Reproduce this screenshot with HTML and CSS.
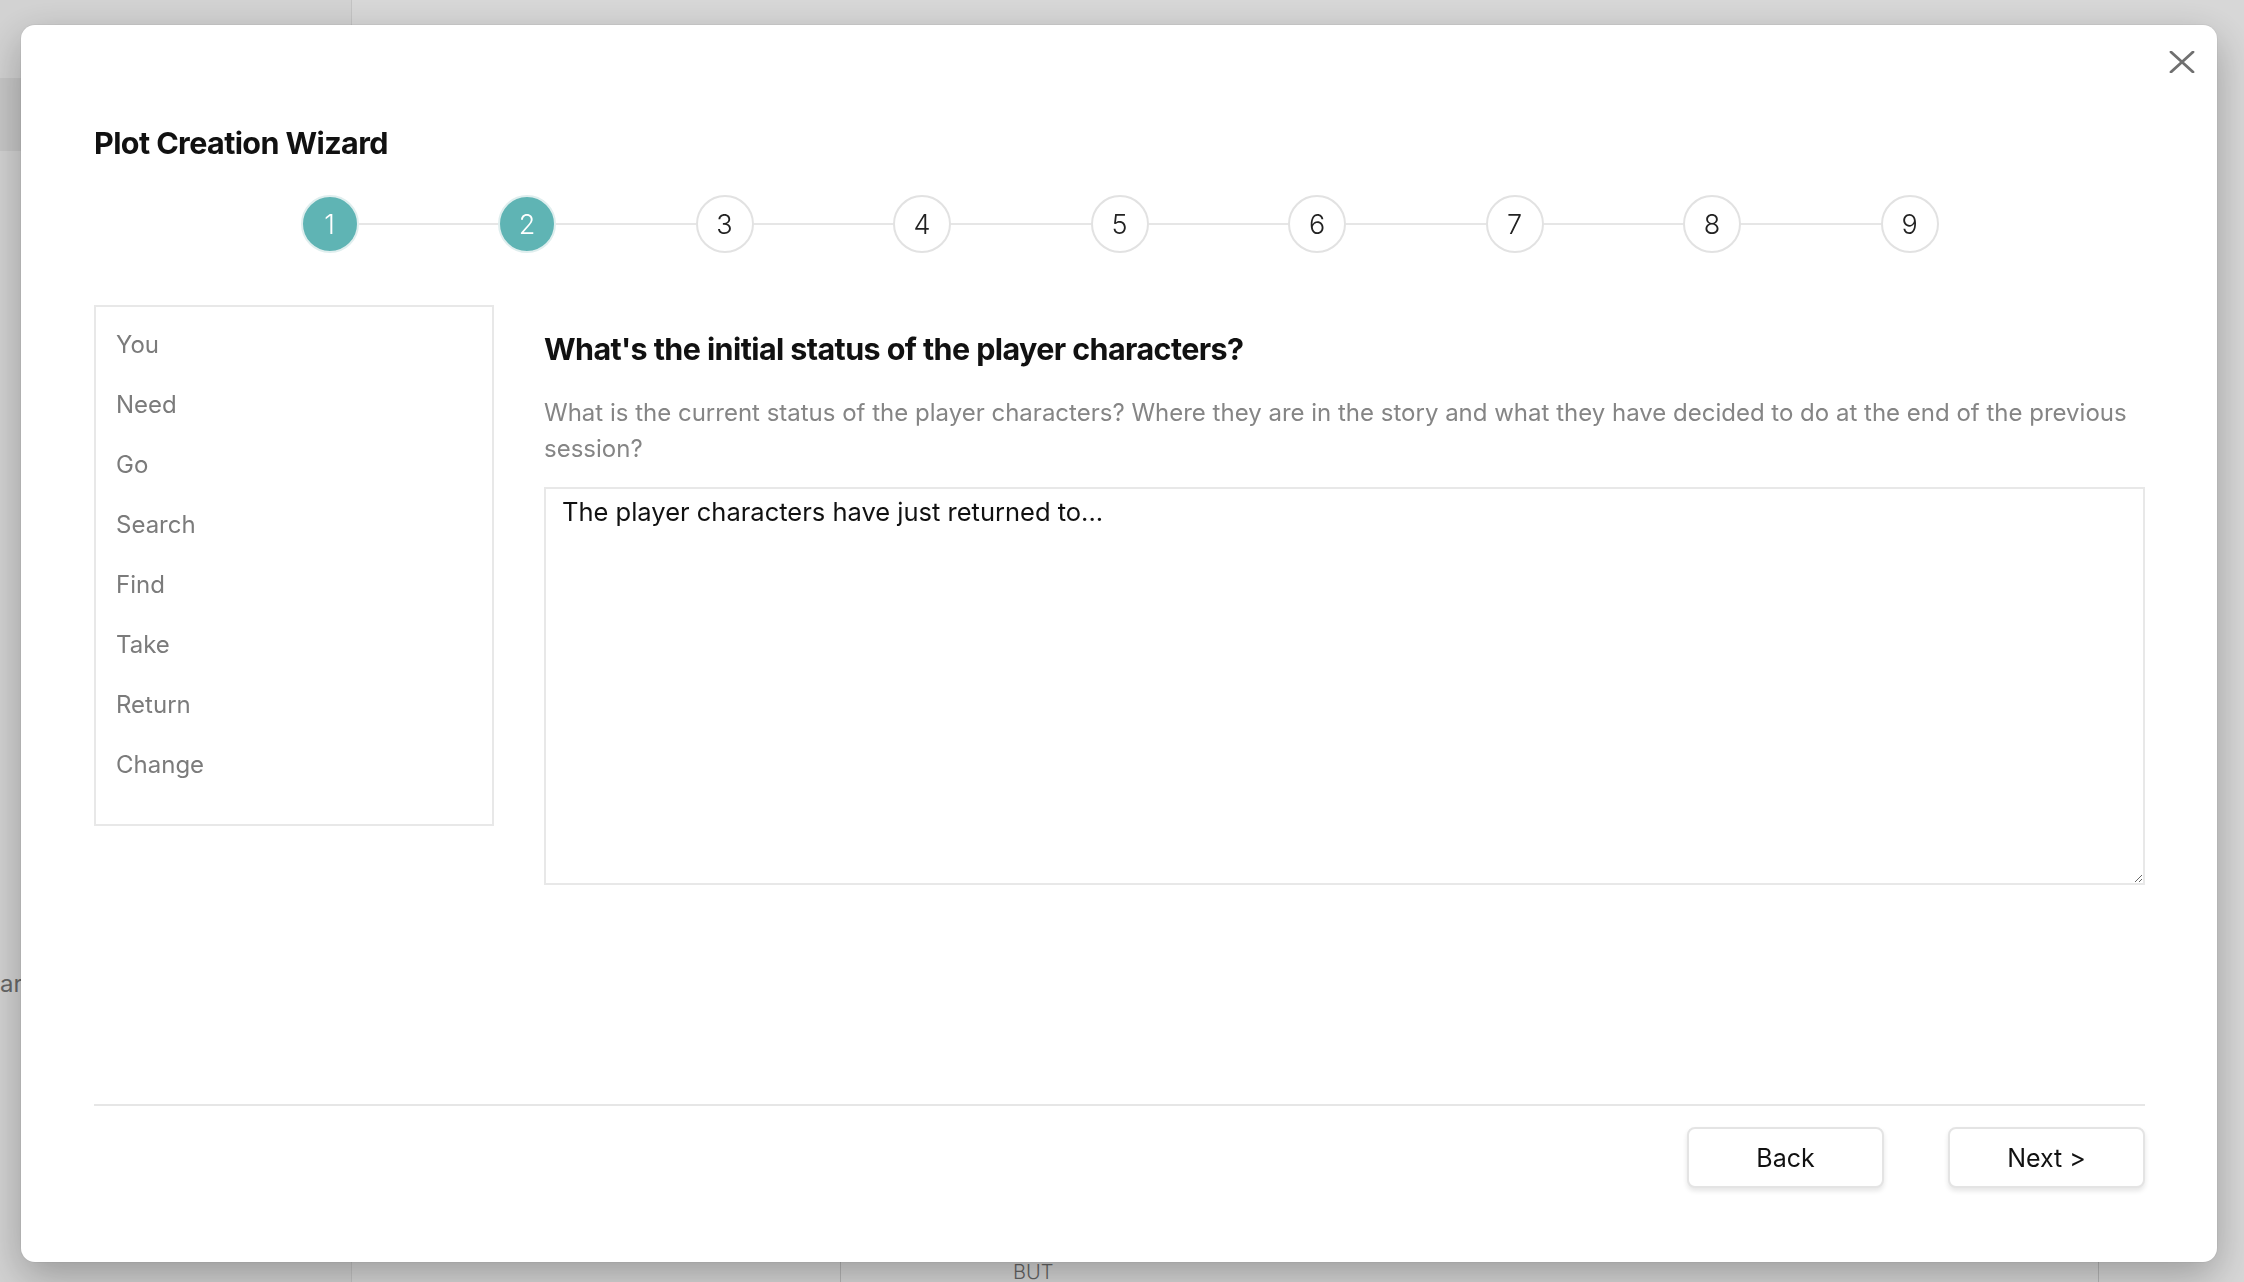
FILE: index.html
```html
<!DOCTYPE html>
<html lang="en">
<head>
<meta charset="utf-8">
<title>Plot Creation Wizard</title>
<link rel="stylesheet" href="styles.css">
</head>
<body>
<div class="app">
  <aside class="app-side">
    <div class="side-sel"></div>
    <div class="side-text">araxes</div>
  </aside>
  <main class="app-main">
    <div class="app-row">
      <div class="cell cell-a"></div>
      <div class="cell cell-b">BUT</div>
      <div class="cell cell-c"></div>
    </div>
  </main>
</div>
<div class="backdrop"></div>

<div class="modal" role="dialog" aria-label="Plot Creation Wizard">
  <button class="close" aria-label="Close">
    <svg width="26" height="22" viewBox="0 0 26 22"><path d="M2 1 L24 21 M24 1 L2 21" stroke="#707070" stroke-width="2.8" stroke-linecap="round" fill="none"/></svg>
  </button>
  <h1 class="title">Plot Creation Wizard</h1>

  <div class="stepper">
    <div class="step active">1</div><div class="bar"></div>
    <div class="step active">2</div><div class="bar"></div>
    <div class="step">3</div><div class="bar"></div>
    <div class="step">4</div><div class="bar"></div>
    <div class="step">5</div><div class="bar"></div>
    <div class="step">6</div><div class="bar"></div>
    <div class="step">7</div><div class="bar"></div>
    <div class="step">8</div><div class="bar"></div>
    <div class="step">9</div>
  </div>

  <div class="wizard-body">
    <ul class="steps-list">
      <li>You</li>
      <li>Need</li>
      <li>Go</li>
      <li>Search</li>
      <li>Find</li>
      <li>Take</li>
      <li>Return</li>
      <li>Change</li>
    </ul>
    <section class="question">
      <h2 class="q-title">What's the initial status of the player characters?</h2>
      <p class="q-desc">What is the current status of the player characters? Where they are in the story and what they have decided to do at the end of the previous session?</p>
      <textarea class="q-input">The player characters have just returned to...</textarea>
    </section>
  </div>

  <footer class="footer">
    <button class="btn">Back</button>
    <button class="btn">Next &gt;</button>
  </footer>
</div>
</body>
</html>
```

FILE: styles.css
```css
* { box-sizing: border-box; }

html, body {
  margin: 0;
  height: 100%;
}

body {
  width: 2244px;
  height: 1282px;
  overflow: hidden;
  font-family: Inter, "Noto Sans", "Liberation Sans", sans-serif;
  background: #fff;
}

/* background application (dimmed) */
.app {
  display: flex;
  height: 1282px;
  background: #fdfdfd;
}

.app-side {
  width: 352px;
  border-right: 1px solid #e6e6e6;
  background: #f7f7f7;
  padding-top: 78px;
}

.side-sel {
  height: 73px;
  background: #e9e9e9;
}

.side-text {
  margin-top: 818px;
  font-size: 24px;
  color: #7a7a7a;
  line-height: 30px;
}

.app-main {
  flex: 1;
  display: flex;
  flex-direction: column;
  justify-content: flex-end;
}

.app-row {
  display: flex;
  height: 20px;
}

.cell {
  border-left: 1px solid #d6d6d6;
}

.cell-a { width: 488px; border-left: none; }
.cell-b {
  width: 1258px;
  padding-left: 172px;
  font-size: 20px;
  line-height: 20px;
  color: #777;
  font-weight: 300;
}
.cell-c { flex: 1; }

.backdrop {
  position: fixed;
  inset: 0;
  background: rgba(0, 0, 0, 0.15);
}

/* modal */
.modal {
  position: fixed;
  left: 21px;
  top: 25px;
  width: 2196px;
  height: 1237px;
  background: #fff;
  border-radius: 14px;
  box-shadow: 0 14px 40px rgba(0, 0, 0, 0.28), 0 0 0 1px rgba(0,0,0,0.04);
  padding: 0 72px 74px 73px;
  display: flex;
  flex-direction: column;
}

.close {
  position: absolute;
  top: 26px;
  right: 22px;
  width: 26px;
  height: 22px;
  padding: 0;
  border: none;
  background: transparent;
  cursor: pointer;
  display: flex;
}

.title {
  margin: 101px 0 0;
  font-size: 30.5px;
  line-height: 34px;
  font-weight: 700;
  letter-spacing: -0.6px;
  color: #111;
}

.stepper {
  margin: 35px auto 0;
  width: 1638px;
  display: flex;
  align-items: center;
}

.step {
  width: 58px;
  height: 58px;
  flex: none;
  border-radius: 50%;
  border: 2px solid #e2e2e2;
  background: #fff;
  display: flex;
  align-items: center;
  justify-content: center;
  font-size: 27px;
  font-weight: 300;
  color: #222;
}

.step.active {
  background: #5fb4b4;
  border-color: #dfeeee;
  color: #fff;
}

.bar {
  flex: 1;
  height: 2px;
  background: #e6e6e6;
}

.wizard-body {
  margin-top: 52px;
  display: flex;
  gap: 50px;
  align-items: flex-start;
}

.steps-list {
  list-style: none;
  margin: 0;
  width: 400px;
  height: 521px;
  flex: none;
  border: 2px solid #e8e8e8;
  padding: 8px 0 0 20px;
}

.steps-list li {
  height: 60px;
  line-height: 60px;
  font-size: 24px;
  color: #7b7b7b;
}

.question {
  flex: 1;
}

.q-title {
  margin: 27px 0 0;
  font-size: 30.5px;
  line-height: 34px;
  font-weight: 700;
  letter-spacing: -0.6px;
  color: #111;
}

.q-desc {
  margin: 29px 0 20px;
  font-size: 24px;
  line-height: 36px;
  color: #858585;
}

.q-input {
  display: block;
  width: 100%;
  height: 398px;
  border: 2px solid #e8e8e8;
  border-radius: 0;
  padding: 8px 16px;
  font-family: inherit;
  font-size: 25.5px;
  line-height: 30px;
  color: #111;
  resize: both;
  outline: none;
}

.footer {
  margin-top: auto;
  border-top: 2px solid #e6e6e6;
  padding-top: 21px;
  display: flex;
  justify-content: flex-end;
  gap: 64px;
}

.btn {
  width: 197px;
  height: 61px;
  border: 2px solid #e4e4e4;
  border-radius: 8px;
  background: #fff;
  box-shadow: 0 3px 5px rgba(0, 0, 0, 0.1);
  font-family: inherit;
  font-size: 25px;
  color: #111;
  cursor: pointer;
}
```
